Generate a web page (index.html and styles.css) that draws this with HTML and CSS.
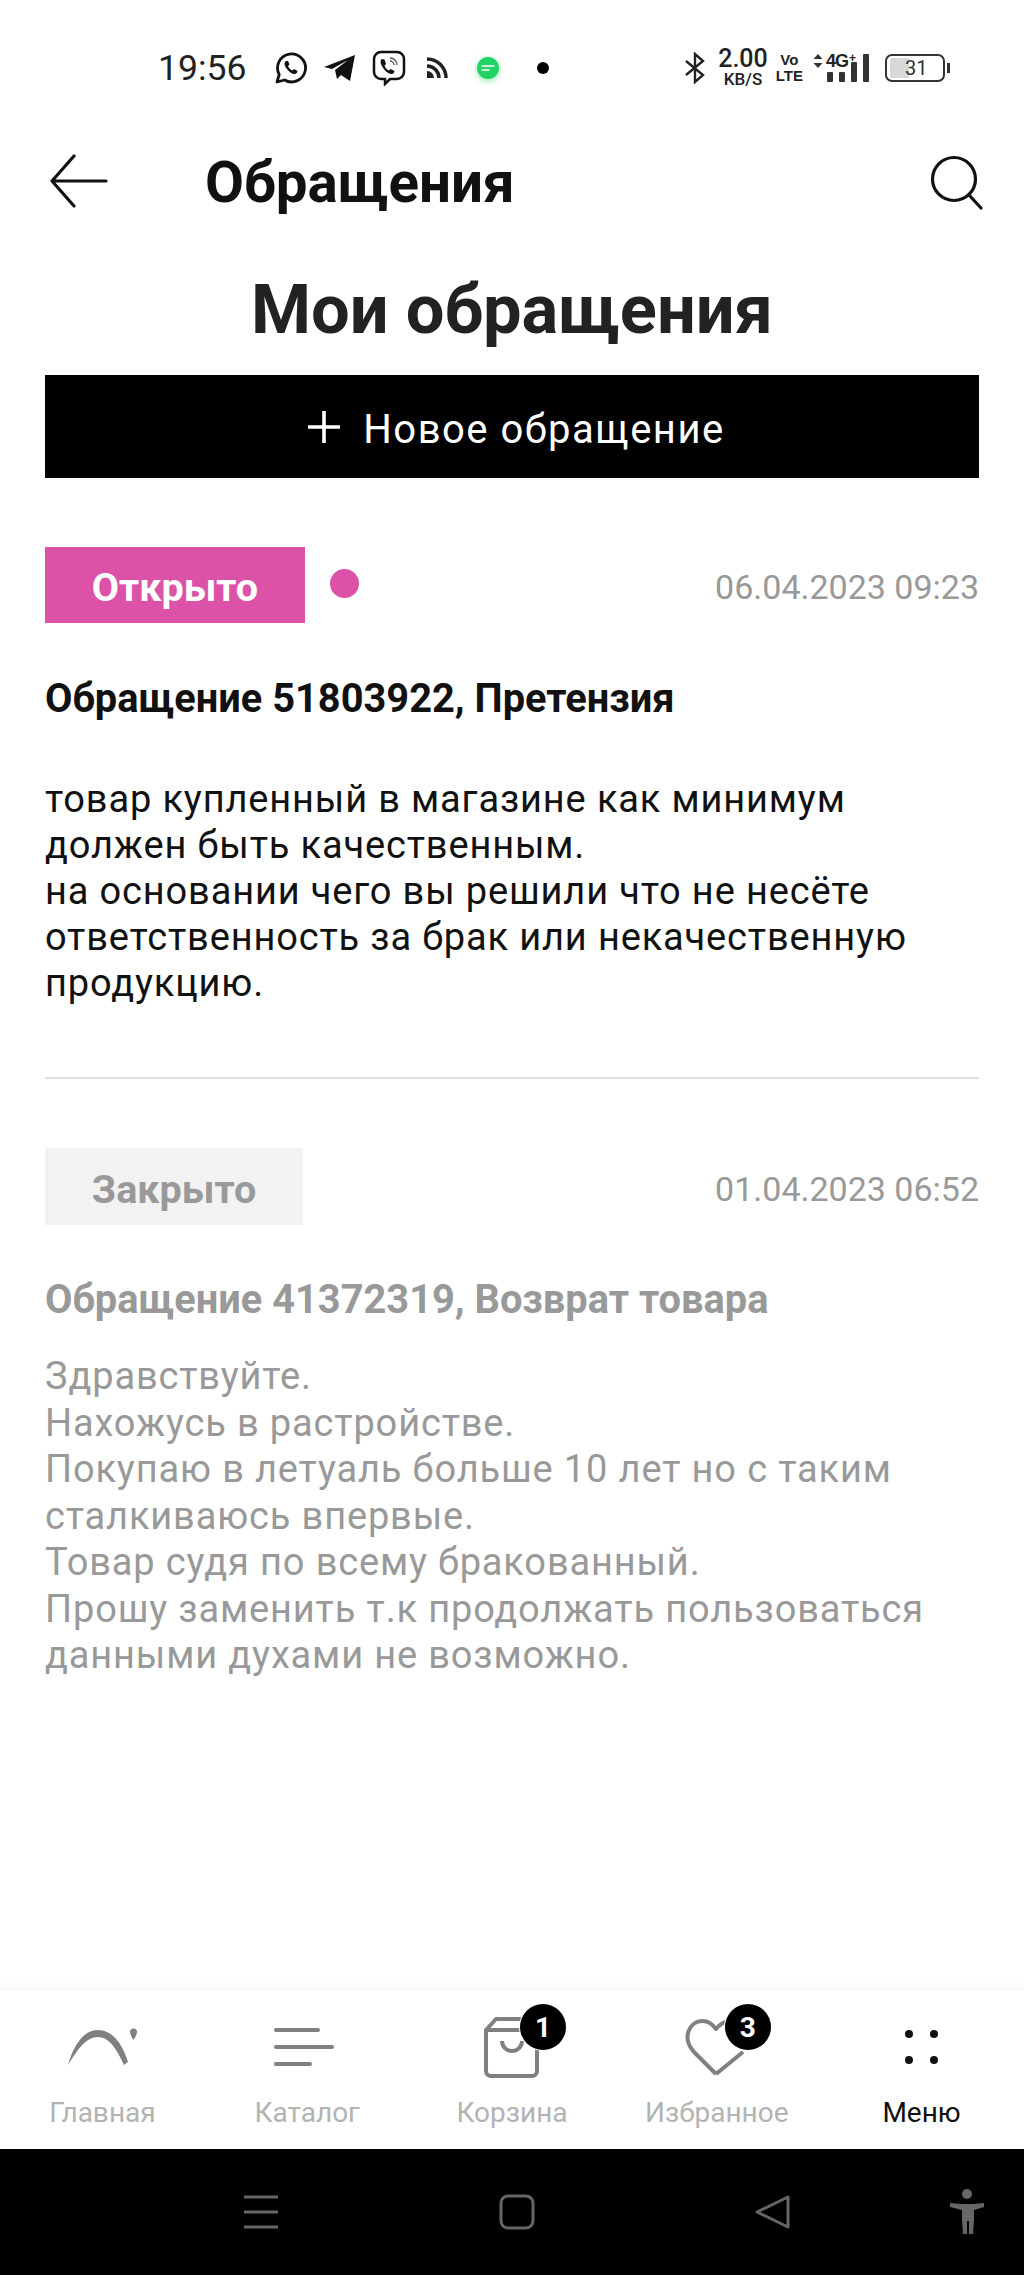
FILE: index.html
```html
<!DOCTYPE html>
<html lang="ru">
<head>
    <meta charset="UTF-8">
    <title>Обращения</title>
    <link rel="stylesheet" href="styles.css">
</head>
<body>
<div class="screen">
    <div class="statusbar">
        <span class="time">19:56</span>
        <svg class="st-ico" width="34" height="34" viewBox="0 0 34 34"><path d="M3 31l2.200-7.500A14 14 0 1 1 10.500 29z" fill="none" stroke="#111" stroke-width="2.800" stroke-linejoin="round"/><path d="M12 10c-2 1.500-2 4 .5 7.500s5.500 5.500 8 5.500c2 0 3-1.500 3-3l-3.500-2-1.500 1.500c-2-.5-4-3-4.500-4.500l1.500-1.500-1.500-3.500z" fill="#111"/></svg>
        <svg class="st-ico ico-tg" width="34" height="34" viewBox="0 0 34 34"><path d="M1 16L32 4l-5 26-9-6-4 4-2-9 13-10-16 9z" fill="#111"/></svg>
        <svg class="st-ico ico-viber" width="36" height="36" viewBox="0 0 36 36"><path d="M10 2h16a7 7 0 0 1 7 7v13a7 7 0 0 1-7 7h-7l-5 5v-5h-4a7 7 0 0 1-7-7V9a7 7 0 0 1 7-7z" fill="none" stroke="#111" stroke-width="2.500"/><path d="M11 9c-2 1.500-2 4 .5 8s6 7 9 7c2 0 3-1.500 3-3l-4-2-1.500 1.500c-2-.5-4-3-4.500-5l1.500-1.500-1.500-4.500z" fill="#111"/><path d="M19 8a7 7 0 0 1 7 7M19 11a4 4 0 0 1 4 4" fill="none" stroke="#555" stroke-width="1.300"/></svg>
        <svg class="st-ico ico-rss" width="24" height="24" viewBox="0 0 24 24"><path d="M2 3a19 19 0 0 1 19 19M2 10a12 12 0 0 1 12 12" fill="none" stroke="#222" stroke-width="3.500"/><path d="M2 15a7 7 0 0 1 7 7H2z" fill="#222"/></svg>
        <span class="msg-app"><svg width="24" height="24" viewBox="0 0 24 24"><circle cx="12" cy="12" r="11" fill="#22d466"/><path d="M6 10h12M6 14h7" stroke="#fff" stroke-width="1.400" stroke-linecap="round"/></svg></span>
        <span class="dot"></span>
        <span class="st-right">
            <svg width="22" height="32" viewBox="0 0 22 32"><path d="M2 9l17 14-8 7V2l8 7L2 23" fill="none" stroke="#222" stroke-width="2.400"/></svg>
            <span class="speed"><b>2.00</b><small>KB/S</small></span>
            <span class="volte">Vo<br>LTE</span>
            <span class="net">
                <span class="net-top"><svg width="10" height="14" viewBox="0 0 10 14"><path d="M5 0l4.500 5H.5zM5 14L.5 9h9z" fill="#333"/></svg>4G<sup>+</sup></span>
                <span class="bars"><i class="b1"></i><i class="b2"></i><i class="b3"></i><i class="b4"></i></span>
            </span>
            <span class="battery"><span class="battery-fill"></span><span class="battery-num">31</span></span>
            <span class="battery-tip"></span>
        </span>
    </div>

    <header class="topbar">
        <svg class="back" width="60" height="54" viewBox="0 0 60 54"><path d="M57 27H3M25 2L3 27l22 25" fill="none" stroke="#111" stroke-width="3.200" stroke-linecap="round" stroke-linejoin="round"/></svg>
        <span class="topbar-title">Обращения</span>
        <svg class="search" width="56" height="56" viewBox="0 0 56 56"><circle cx="24" cy="24" r="21.500" fill="none" stroke="#111" stroke-width="3.200"/><path d="M39 40l12 13" stroke="#111" stroke-width="3.200" stroke-linecap="round"/></svg>
    </header>

    <main class="content">
        <h1>Мои обращения</h1>
        <div class="new-btn">
            <svg width="34" height="34" viewBox="0 0 34 34"><path d="M17 1v32M1 17h32" stroke="#fff" stroke-width="3.600"/></svg>
            <span class="new-btn-label">Новое обращение</span>
        </div>

        <section class="ticket ticket-open">
            <div class="ticket-head">
                <span class="badge badge-open">Открыто</span>
                <span class="new-dot"></span>
                <span class="date">06.04.2023 09:23</span>
            </div>
            <div class="ticket-title">Обращение 51803922, Претензия</div>
            <p class="ticket-text">товар купленный в магазине как минимум<br>должен быть качественным.<br>на основании чего вы решили что не несёте<br>ответственность за брак или некачественную<br>продукцию.</p>
        </section>

        <section class="ticket ticket-closed">
            <div class="ticket-head">
                <span class="badge badge-closed">Закрыто</span>
                <span class="date">01.04.2023 06:52</span>
            </div>
            <div class="ticket-title">Обращение 41372319, Возврат товара</div>
            <p class="ticket-text">Здравствуйте.<br>Нахожусь в растройстве.<br>Покупаю в летуаль больше 10 лет но с таким<br>сталкиваюсь впервые.<br>Товар судя по всему бракованный.<br>Прошу заменить т.к продолжать пользоваться<br>данными духами не возможно.</p>
        </section>
    </main>

    <nav class="tabbar">
        <div class="tab">
            <svg class="tab-ico" width="80" height="66" viewBox="0 0 80 66"><path d="M6 49C12 28 22 14 36 14c13 0 24 12 30 32l-4 3C54 31 46 21 36 21 24 21 16 33 6 49z" fill="#808080"/><path d="M68 16a3.500 3.500 0 0 1 7 0c0 2-2 6-3.500 8-1.500-2-3.500-6-3.500-8z" fill="#808080"/></svg>
            <span>Главная</span>
        </div>
        <div class="tab">
            <svg class="tab-ico" width="80" height="66" viewBox="0 0 80 66"><path d="M9 14h42M9 31h56M9 48h34" stroke="#808080" stroke-width="4" stroke-linecap="round"/></svg>
            <span>Каталог</span>
        </div>
        <div class="tab">
            <span class="ico-wrap">
                <svg class="tab-ico" width="80" height="66" viewBox="0 0 80 66"><path d="M14 14L24 3h34l7 11v41a5 5 0 0 1-5 5H19a5 5 0 0 1-5-5zM14 14h46" fill="none" stroke="#808080" stroke-width="4" stroke-linejoin="round"/><path d="M30 25a10 10 0 0 0 20 0" fill="none" stroke="#808080" stroke-width="4"/></svg>
                <span class="count">1</span>
            </span>
            <span>Корзина</span>
        </div>
        <div class="tab">
            <span class="ico-wrap">
                <svg class="tab-ico" width="80" height="66" viewBox="0 0 80 66"><path d="M39 58L17 36C5 23 11 5 26 5c6 0 10 4 13 8 3-4 7-7 13-8M39 58l27-22" fill="none" stroke="#808080" stroke-width="4" stroke-linejoin="round"/></svg>
                <span class="count">3</span>
            </span>
            <span>Избранное</span>
        </div>
        <div class="tab tab-active">
            <svg class="tab-ico" width="80" height="66" viewBox="0 0 80 66"><circle cx="27" cy="18" r="4" fill="#111"/><circle cx="52" cy="18" r="4" fill="#111"/><circle cx="27" cy="44" r="4" fill="#111"/><circle cx="52" cy="44" r="4" fill="#111"/></svg>
            <span>Меню</span>
        </div>
    </nav>

    <div class="sysnav">
        <svg width="36" height="36" viewBox="0 0 36 36"><path d="M1 3h34M1 18h34M1 33h34" stroke="#666" stroke-width="3"/></svg>
        <svg width="36" height="36" viewBox="0 0 36 36"><rect x="2" y="2" width="32" height="32" rx="7" fill="none" stroke="#666" stroke-width="3"/></svg>
        <svg width="36" height="36" viewBox="0 0 36 36"><path d="M33 3v30L2 18z" fill="none" stroke="#666" stroke-width="3" stroke-linejoin="round"/></svg>
        <svg class="sys-person" width="36" height="46" viewBox="0 0 36 46"><circle cx="18" cy="5" r="5" fill="#666"/><path d="M1 14l11 1h12l11-1v4l-10 3v10l-1 14h-4V32h-2v13h-4l-1-14V21L1 18z" fill="#666"/></svg>
    </div>
</div>
</body>
</html>
```

FILE: styles.css
```css
* {
    box-sizing: border-box;
}

body {
    margin: 0;
    background-color: #fff;
    font-family: 'Roboto', 'Liberation Sans', sans-serif;
    color: #111;
}

.screen {
    width: 1024px;
    height: 2275px;
    display: flex;
    flex-direction: column;
    overflow: hidden;
}

/* status bar */
.statusbar {
    height: 108px;
    padding: 28px 0 0 158px;
    display: flex;
    align-items: center;
    flex-shrink: 0;
}

.time {
    font-size: 35.5px;
    color: #222;
    margin-right: 28px;
}

.ico-tg {
    margin-left: 15px;
}

.ico-viber {
    margin-left: 14px;
}

.ico-rss {
    margin-left: 18px;
}

.msg-app {
    display: flex;
    margin-left: 27px;
    margin-right: 37px;
    filter: drop-shadow(0 2px 3px rgba(34, 212, 102, .5));
}

.dot {
    width: 12px;
    height: 12px;
    background-color: #000;
    border-radius: 50%;
}

.st-right {
    margin-left: auto;
    margin-right: 74px;
    display: flex;
    align-items: center;
    color: #222;
}

.speed {
    display: flex;
    flex-direction: column;
    align-items: center;
    margin: 0 8px 0 12px;
}

.speed b {
    font-size: 25px;
    font-weight: 500;
    line-height: 22px;
}

.speed small {
    font-size: 17px;
    font-weight: 500;
    line-height: 18px;
}

.volte {
    font-family: 'Liberation Sans', sans-serif;
    font-size: 15px;
    font-weight: 700;
    line-height: 16px;
    text-align: center;
    margin-right: 10px;
}

.net {
    display: flex;
    flex-direction: column;
    margin-right: 16px;
}

.net-top {
    font-family: 'Liberation Sans', sans-serif;
    font-size: 18px;
    font-weight: 700;
    line-height: 14px;
    letter-spacing: -1px;
    display: flex;
    align-items: center;
    gap: 3px;
}

.net-top sup {
    font-size: 12px;
    line-height: 8px;
    align-self: flex-start;
    margin-left: -2px;
}

.bars {
    display: flex;
    align-items: flex-end;
    gap: 6px;
    height: 18px;
    margin: -4px 0 0 14px;
}

.bars i {
    width: 6px;
    background-color: #333;
    border-radius: 1px;
}

.b1 { height: 10px; }
.b2 { height: 10px; }
.b3 { height: 20px; }
.b4 { height: 28px; }

.battery {
    width: 60px;
    height: 28px;
    border: 2px solid #333;
    border-radius: 7px;
    padding: 2px 3px;
    display: flex;
}

.battery-fill {
    width: 19px;
    background-color: #d8d8d8;
    border-radius: 2px 0 0 2px;
}

.battery-num {
    font-size: 20px;
    line-height: 20px;
    color: #333;
    margin-left: -4px;
}

.battery-tip {
    width: 3px;
    height: 10px;
    margin-left: 2px;
    background-color: #333;
}

/* app bar */
.topbar {
    height: 150px;
    display: flex;
    align-items: center;
    padding: 0 38px 0 49px;
    flex-shrink: 0;
}

.back {
    margin-bottom: 4px;
}

.topbar-title {
    font-size: 56.5px;
    font-weight: 700;
    margin-left: 96px;
}

.search {
    margin-left: auto;
}

/* content */
.content {
    flex: 1;
    padding: 0 45px;
}

h1 {
    font-size: 68.6px;
    font-weight: 700;
    color: #222;
    text-align: center;
    margin: 12px 0 0;
    line-height: 80px;
}

.new-btn {
    margin-top: 25px;
    height: 103px;
    padding-left: 8px;
    background-color: #000;
    color: #fff;
    font-size: 40px;
    letter-spacing: 1.5px;
    display: flex;
    align-items: center;
    justify-content: center;
    gap: 22px;
}

.new-btn-label {
    padding-top: 5px;
}

.ticket-head {
    display: flex;
    align-items: center;
}

.badge {
    width: 260px;
    height: 76px;
    padding-top: 5px;
    display: flex;
    align-items: center;
    justify-content: center;
    font-size: 39.5px;
    font-weight: 700;
}

.badge-open {
    background-color: #dc52a8;
    color: #fff;
}

.badge-closed {
    width: 258px;
    height: 77px;
    background-color: #f2f2f2;
    color: #999;
}

.new-dot {
    width: 29px;
    height: 29px;
    margin-left: 25px;
    margin-bottom: 4px;
    background-color: #dc52a8;
    border-radius: 50%;
}

.date {
    margin-left: auto;
    padding-top: 4px;
    font-size: 34px;
    color: #999;
}

.ticket-open {
    margin-top: 69px;
    padding-bottom: 71px;
    border-bottom: 2px solid #ddd;
}

.ticket-closed {
    margin-top: 69px;
    color: #999;
}

.ticket-title {
    font-size: 39.8px;
    font-weight: 700;
    line-height: 44px;
}

.ticket-open .ticket-title {
    margin-top: 54px;
}

.ticket-closed .ticket-title {
    margin-top: 53px;
}

.ticket-text {
    font-size: 38px;
    line-height: 46px;
    letter-spacing: .85px;
    margin: 0;
}

.ticket-open .ticket-text {
    margin-top: 55px;
}

.ticket-closed .ticket-text {
    margin-top: 31px;
    line-height: 46.5px;
}

/* bottom tabs */
.tabbar {
    height: 161px;
    border-top: 2px solid #f4f4f4;
    box-shadow: 0 -4px 6px rgba(0, 0, 0, .02);
    display: flex;
    flex-shrink: 0;
    padding-top: 26px;
}

.tab {
    flex: 1;
    display: flex;
    flex-direction: column;
    align-items: center;
    gap: 14px;
    font-size: 28px;
    line-height: 33px;
    color: #b3b3b3;
}

.tab-ico {
    display: block;
}

.tab-active {
    color: #111;
}

.ico-wrap {
    position: relative;
    display: block;
}

.count {
    position: absolute;
    top: -12px;
    right: -14px;
    width: 46px;
    height: 46px;
    background-color: #000;
    color: #fff;
    border-radius: 50%;
    box-shadow: 0 0 0 1px #fff;
    font-size: 28px;
    font-weight: 700;
    display: flex;
    align-items: center;
    justify-content: center;
}

/* android nav */
.sysnav {
    height: 126px;
    background-color: #000;
    display: flex;
    align-items: center;
    gap: 220px;
    padding-left: 243px;
    flex-shrink: 0;
}

.sys-person {
    margin-left: -62px;
}
```
